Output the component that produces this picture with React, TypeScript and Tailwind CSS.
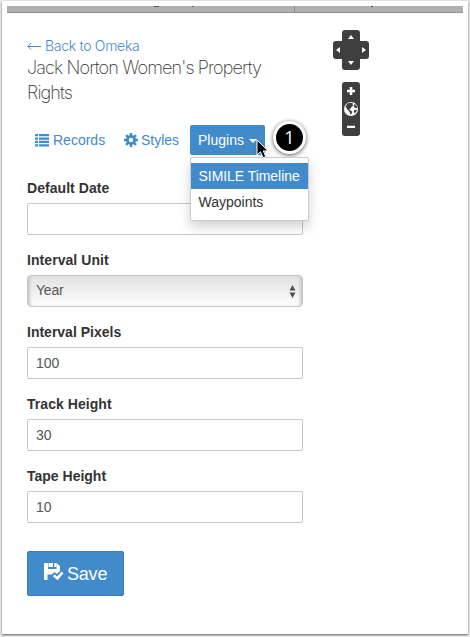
import React from "react";

function Field({ label, value, tracking }: { label: string; value: string; tracking: string }) {
  return (
    <div className="h-[72px]">
      <label className={`block h-[23px] text-sm leading-4 font-bold text-[#333] ${tracking}`}>{label}</label>
      <div className="flex h-8 items-center rounded-[2px] border border-[#c8c8c8] bg-white px-2 text-sm text-[#555]">{value}</div>
    </div>
  );
}

function IntervalUnit() {
  return (
    <div className="h-[72px]">
      <label className="block h-[23px] text-sm leading-4 font-bold tracking-[0.06px] text-[#333]">Interval Unit</label>
      <div className="flex h-8 items-center justify-between rounded-[4px] border border-[#c4c4c4] bg-linear-to-b from-[#e2e2e2] to-[#fdfdfd] pr-[6px] pb-[2px] pl-2 text-sm text-[#555] shadow-[inset_4px_0_3px_-2px_#c8c8c8,inset_-4px_0_3px_-2px_#c8c8c8]">
        <span className="tracking-[-0.2px]">Year</span>
        <svg width="7" height="13" viewBox="0 0 7 13" fill="#505050" className="mt-[2px]">
          <path d="M3.5 0L6.5 5.5H.5zM.5 7.5h6L3.5 13z" />
        </svg>
      </div>
    </div>
  );
}

function ListIcon() {
  return (
    <svg width="14" height="13" viewBox="0 0 14 13" fill="#428bca" className="mr-1">
      <path d="M0 0h3v2.3H0zM4 0h10v2.3H4zM0 3.4h3v2.3H0zM4 3.4h10v2.3H4zM0 6.8h3v2.3H0zM4 6.8h10v2.3H4zM0 10.2h3v2.3H0zM4 10.2h10v2.3H4z" />
    </svg>
  );
}

function GearIcon() {
  return (
    <svg width="14" height="14" viewBox="0 0 14 14" className="mr-[3px]">
      <circle cx="7" cy="7" r="3.6" fill="none" stroke="#428bca" strokeWidth="2.8" />
      <path d="M7 0v3M7 11v3M0 7h3M11 7h3M2.05 2.05l2 2M9.95 9.95l2 2M11.95 2.05l-2 2M4.05 9.95l-2 2" stroke="#428bca" strokeWidth="2.4" />
    </svg>
  );
}

function SaveIcon() {
  return (
    <svg width="20" height="18" viewBox="0 0 20 18" className="mt-[-4px] mr-[3px]">
      <path fill="#fff" d="M0 0h4v6h8.5V0l3.5 3V8l-3.3 3-2-2-3 2.5H3.5V17H0z" />
      <path fill="#fff" d="M4.5 0h4.5v4H4.5zM10.3 0h2.2v4h-2.2z" />
      <path fill="none" stroke="#fff" strokeWidth="2.6" d="M9.8 12.3l3.6 3.2L18.5 9.3" />
    </svg>
  );
}

function MapControls() {
  return (
    <svg width="36" height="107" viewBox="0 0 36 107">
      <g fill="#3f3f3f">
        <rect x="9" width="18" height="40" rx="3" />
        <rect y="11" width="36" height="18" rx="3" />
        <rect x="9" y="52" width="18" height="54" rx="3" />
      </g>
      <g fill="#fff">
        <path d="M18 5l3 4h-6zM15 31h6l-3 4zM3 20l4-3v6zM33 20l-4-3v6z" />
        <path d="M16.7 57h2.6v2.7H22v2.6h-2.7V65h-2.6v-2.7H14v-2.6h2.7zM14 95.7h8v2.3h-8z" />
        <circle cx="18" cy="79" r="7" />
      </g>
      <path fill="#3f3f3f" d="M12.6 76.2l1.8-2.6 2.6-.8 3 .4-.6 1.4 1.2.8-2 1.4-.8 1.8-1.6.4 1.2 1.6 1.8.8-.6 2.4-1 1-1.2-3-2.4-2.8zM21.4 74l1.6.8 1.2 2.2-.4 1.2-1.8-.4-1-1.2zM21 80.2l2.8-.8-.4 2.2-1.4 1.6-1.2-1.2z" />
    </svg>
  );
}

export default function App() {
  return (
    <div className="h-[637px] w-[470px] overflow-hidden bg-[#ebebeb] pt-px pl-[2px] font-['Liberation_Sans',sans-serif]">
      <div className="relative h-[633px] w-[466px] bg-white px-[5px] pt-[5px] shadow-[0_1px_2px_#606060]">
        <div className="flex h-[7px] w-[456px] border-b border-[#929292] bg-[#b0b0b0]">
          <div className="flex w-[288px] border-r border-[#898989]">
            <span className="ml-[147px] h-px w-[5px] bg-[#555]" />
            <span className="ml-[33px] h-px w-[2px] bg-[#666]" />
          </div>
          <span className="ml-[76px] h-px w-[2px] bg-[#444]" />
        </div>
        <main className="ml-5 w-[276px] pt-[22px]">
          <header className="h-[75px] font-['Inter',sans-serif] text-[#333]">
            <a className="flex h-5 items-center text-[14px] font-light text-[#428bca]">
              <svg width="14" height="8" viewBox="0 0 14 8" fill="none" stroke="#428bca" className="mt-px mr-1">
                <path d="M4 1L1 4.5l3 3M1 4.5h13" />
              </svg>
              <span className="tracking-[-0.3px]">Back to Omeka</span>
            </a>
            <h1 className="text-[18px] leading-[25px] font-extralight tracking-[-0.86px] whitespace-nowrap">
              Jack Norton Women's Property<br />Rights
            </h1>
          </header>
          <nav className="mt-[15px] flex h-[31px] text-sm text-[#428bca]">
            <a className="flex h-[30px] w-[97px] items-center pl-2"><ListIcon />Records</a>
            <a className="flex h-[30px] w-[66px] items-center"><GearIcon />Styles</a>
            <div className="relative">
              <button className="flex h-[30px] w-[75px] items-center rounded-[2px] bg-[#428bca] pl-2 text-white">
                Plugins<span className="mt-[2px] ml-[5px] border-x-4 border-t-4 border-x-transparent border-t-white" />
              </button>
              <ul className="absolute top-8 left-0 z-10 h-16 w-[119px] rounded-[2px] border border-[#ccc] bg-white pt-[5px] text-[#333] shadow-[0_6px_12px_rgba(0,0,0,0.18)]">
                <li className="h-[26px] bg-[#428bca] pl-[7.5px] leading-[26px] tracking-[-0.05px] whitespace-nowrap text-white">SIMILE Timeline</li>
                <li className="pl-[7.5px] leading-[26px]">Waypoints</li>
              </ul>
              <svg width="15" height="19" viewBox="0 0 15 19" className="absolute top-[15px] left-[66px] z-20 drop-shadow-sm">
                <path d="M1 0v15l3.5-3.2 2.5 6 2.8-1.2-2.5-5.7h4.8z" fill="#000" stroke="#fff" strokeWidth="1" />
              </svg>
              <span className="absolute top-[-4px] left-[83px] flex size-[33px] items-center justify-center rounded-full border-[3px] border-white bg-black font-['Open_Sans',sans-serif] text-[18px] text-white shadow-[0_1px_4px_#555]">1</span>
            </div>
          </nav>
          <form className="pt-6">
            <Field label="Default Date" value="" tracking="tracking-[0.05px]" />
            <IntervalUnit />
            <Field label="Interval Pixels" value="100" tracking="tracking-normal" />
            <Field label="Track Height" value="30" tracking="tracking-[0.05px]" />
            <Field label="Tape Height" value="10" tracking="tracking-normal" />
            <button className="mt-[11px] flex h-[45px] w-[97px] items-center rounded-[2px] border border-[#357ebd] bg-[#428bca] pl-4 text-lg text-white">
              <SaveIcon /><span className="tracking-[-0.2px]">Save</span>
            </button>
          </form>
        </main>
        <div className="absolute top-[29px] left-[331px]"><MapControls /></div>
      </div>
    </div>
  );
}
